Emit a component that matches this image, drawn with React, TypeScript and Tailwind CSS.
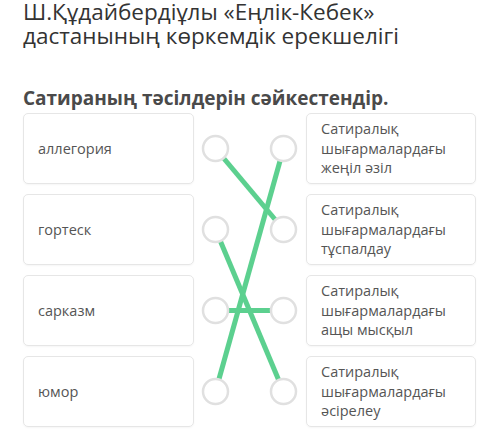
const leftItems = ['аллегория', 'гортеск', 'сарказм', 'юмор'];
const rightItems = [
  'Сатиралық шығармалардағы жеңіл әзіл',
  'Сатиралық шығармалардағы тұспалдау',
  'Сатиралық шығармалардағы ащы мысқыл',
  'Сатиралық шығармалардағы әсірелеу',
];

// left index -> right index
const links: [number, number][] = [
  [0, 1],
  [1, 3],
  [2, 2],
  [3, 0],
];

const ROW = 71;
const GAP = 10;
const cy = (i: number) => i * (ROW + GAP) + ROW / 2;
const LX = 21.5;
const RX = 89.5;

function Connectors() {
  const h = ROW * 4 + GAP * 3;
  return (
    <svg width="112" height={h} viewBox={`0 0 112 ${h}`} className="block">
      {links.map(([l, r], i) => (
        <line
          key={i}
          x1={LX}
          y1={cy(l)}
          x2={RX}
          y2={cy(r)}
          stroke="#5cd08f"
          strokeWidth="5"
        />
      ))}
      {[0, 1, 2, 3].map((i) => (
        <g key={i}>
          <circle cx={LX} cy={cy(i)} r="12.5" fill="#fff" stroke="#e0e0e0" strokeWidth="2.5" />
          <circle cx={RX} cy={cy(i)} r="12.5" fill="#fff" stroke="#e0e0e0" strokeWidth="2.5" />
        </g>
      ))}
    </svg>
  );
}

export default function App() {
  return (
    <div
      className="w-[500px] h-[448px] bg-white overflow-hidden pl-[23px]"
      style={{ fontFamily: '"Open Sans", "Noto Sans", sans-serif' }}
    >
      <h1 className="text-[22.5px] leading-[24px] font-normal text-[#333]">
        Ш.Құдайбердіұлы «Еңлік-Кебек»
        <br />
        дастанының көркемдік ерекшелігі
      </h1>
      <h2 className="mt-[38px] text-[19px] leading-[24px] font-bold text-[#4a4a4a]">
        Сатираның тәсілдерін сәйкестендір.
      </h2>

      <div className="mt-[3px] flex">
        <div className="flex flex-col gap-[10px] w-[171px]">
          {leftItems.map((t) => (
            <div
              key={t}
              className="h-[71px] flex items-center px-[14px] rounded-[5px] border border-[#e6e6e6] shadow-[0_1px_2px_rgba(0,0,0,0.04)] text-[14.5px] text-[#555]"
            >
              {t}
            </div>
          ))}
        </div>
        <Connectors />
        <div className="flex flex-col gap-[10px] w-[170px]">
          {rightItems.map((t) => (
            <div
              key={t}
              className="h-[71px] flex items-center pl-[14px] pr-[10px] rounded-[5px] border border-[#e6e6e6] shadow-[0_1px_2px_rgba(0,0,0,0.04)] text-[14.5px] leading-[19.5px] text-[#555]"
            >
              {t}
            </div>
          ))}
        </div>
      </div>
    </div>
  );
}
